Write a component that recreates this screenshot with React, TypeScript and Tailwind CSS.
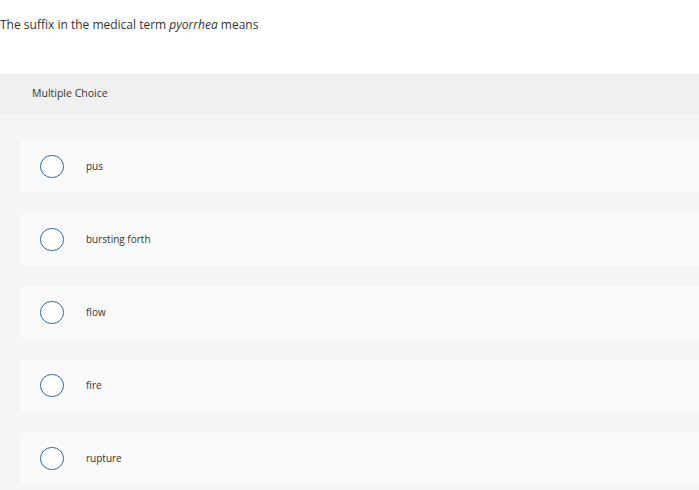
import React from "react";

const options = ["pus", "bursting forth", "flow", "fire", "rupture"];

export default function App() {
  return (
    <div className="w-[699px] h-[490px] bg-white text-[#333] overflow-hidden" style={{ fontFamily: "'Open Sans', sans-serif", fontVariantLigatures: "none" }}>
      <div className="h-[74px] pt-[17px]">
        <p className="text-[12px] leading-[16px] text-[#333]">
          The suffix in the medical term <em>pyorrhea</em> means
        </p>
      </div>
      <div className="h-[40px] bg-[#f0f0f0] flex items-center pl-[32px]">
        <span className="text-[10.5px] text-[#333]">Multiple Choice</span>
      </div>
      <div className="bg-[#f5f5f5] pl-[20px] pt-[26px] h-[376px] flex flex-col gap-[20px]">
        {options.map((o) => (
          <div key={o} className="h-[53px] bg-[#fafafa] rounded-l-[3px] flex items-center pl-[20px]">
            <div className="w-[24px] h-[23px] rounded-full border-[1.5px] border-[#2a65a0] bg-white" />
            <span className="ml-[22px] text-[10px] text-[#333]">{o}</span>
          </div>
        ))}
      </div>
    </div>
  );
}
